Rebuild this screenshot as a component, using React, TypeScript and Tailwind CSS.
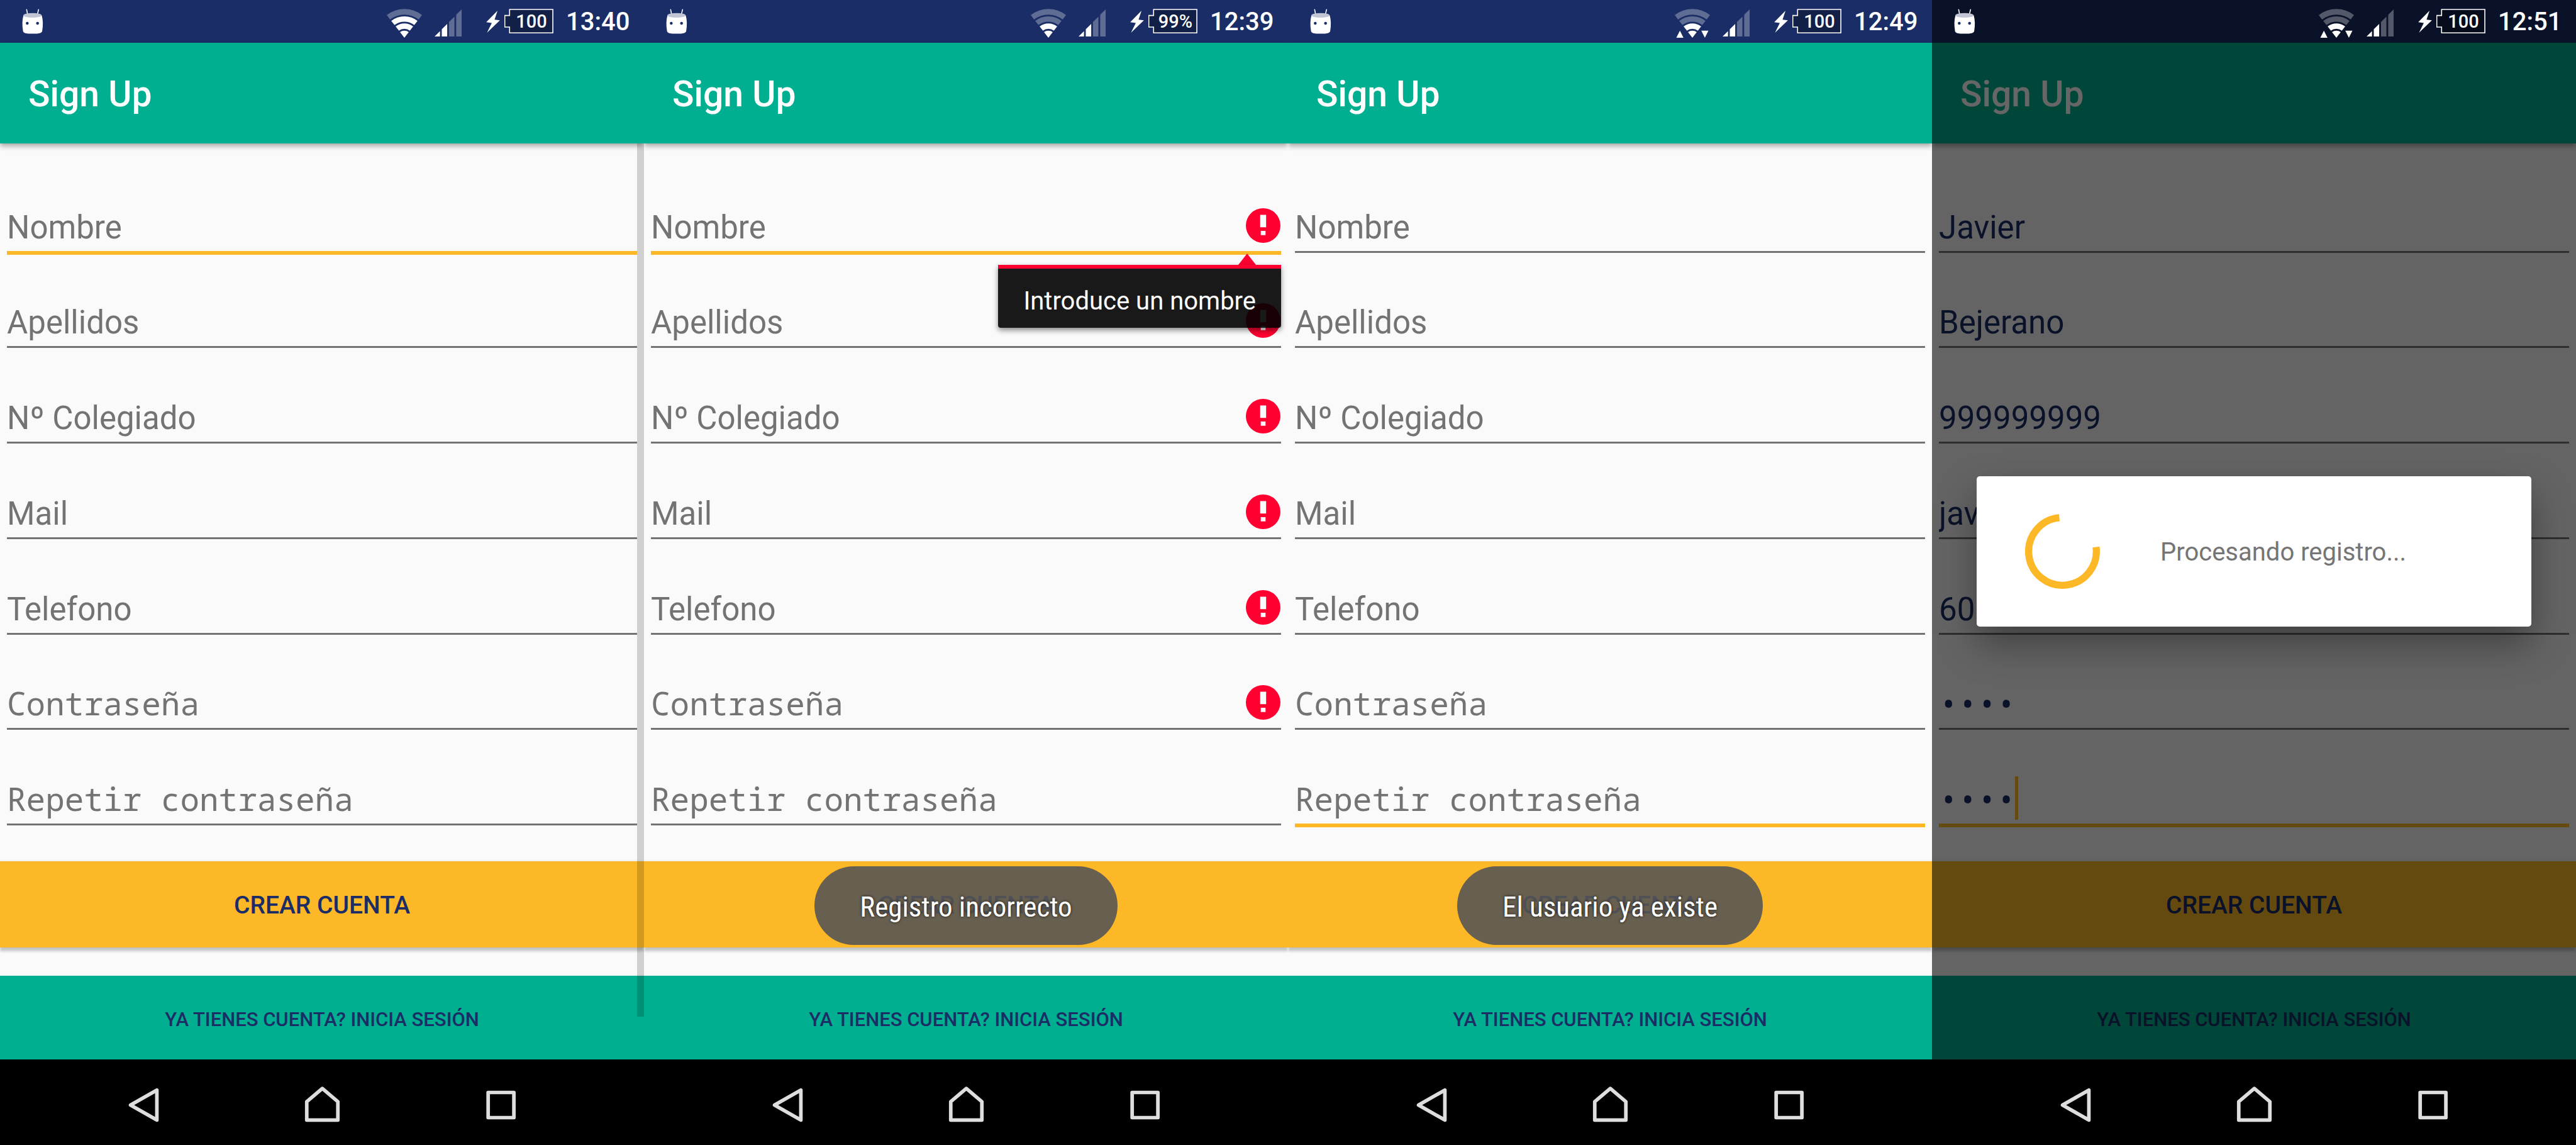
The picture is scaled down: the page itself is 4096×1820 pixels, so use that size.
import React from "react";

type Field = { name: string; secret?: boolean };

type ScreenProps = {
  time: string;
  battery: string;
  wifiLevel: number;
  traffic?: boolean;
  focused: number;
  errors?: number[];
  tooltip?: string;
  toast?: string;
  scrollbar?: boolean;
  values?: string[];
  progress?: string;
};

const fields: Field[] = [
  { name: "Nombre" },
  { name: "Apellidos" },
  { name: "Nº Colegiado" },
  { name: "Mail" },
  { name: "Telefono" },
  { name: "Contraseña", secret: true },
  { name: "Repetir contraseña", secret: true },
];

const screens: ScreenProps[] = [
  { time: "13:40", battery: "100", wifiLevel: 3, focused: 0, scrollbar: true },
  {
    time: "12:39",
    battery: "99%",
    wifiLevel: 2,
    focused: 0,
    errors: [0, 1, 2, 3, 4, 5],
    tooltip: "Introduce un nombre",
    toast: "Registro incorrecto",
  },
  { time: "12:49", battery: "100", wifiLevel: 2, traffic: true, focused: 6, toast: "El usuario ya existe" },
  {
    time: "12:51",
    battery: "100",
    wifiLevel: 2,
    traffic: true,
    focused: 6,
    values: ["Javier", "Bejerano", "999999999", "jav", "60", "1234", "1234"],
    progress: "Procesando registro...",
  },
];

function DroidIcon() {
  return (
    <svg viewBox="50 36 106 124" className="h-[40px] w-[34px]" aria-hidden="true">
      <path d="M73 40 L78 64 M132 40 L126 64" stroke="#fff" strokeWidth="5" strokeLinecap="round" />
      <path
        d="M57 68 C51 90 50 118 55 146 C57 155 66 159 102 159 C138 159 148 155 150 146 C155 118 154 90 148 68 Z"
        fill="#fff"
      />
      <ellipse cx="102" cy="68" rx="45" ry="11.5" fill="#c2c6d4" />
      <circle cx="76" cy="107" r="7" fill="#1a2d66" />
      <circle cx="127" cy="107" r="7" fill="#1a2d66" />
    </svg>
  );
}

const wifiBands = [
  [0, 36],
  [45, 72],
  [81, 108],
  [117, 145],
];

function wedge(inner: number, outer: number) {
  const sin = 0.614;
  const cos = 0.789;
  const at = (r: number, side: number) => `${88 + side * r * sin} ${146 - r * cos}`;
  return `M${at(inner, -1)} L${at(outer, -1)} A${outer} ${outer} 0 0 1 ${at(outer, 1)} L${at(inner, 1)} A${inner} ${inner} 0 0 0 ${at(inner, -1)} Z`;
}

function WifiIcon({ level, traffic }: { level: number; traffic?: boolean }) {
  return (
    <svg viewBox="0 0 176 146" className="mt-1.5 h-[46px] w-[56px]" fill="#fff" aria-hidden="true">
      {wifiBands.map(([inner, outer], i) => (
        <path key={outer} d={wedge(inner, outer)} opacity={i < level ? 1 : 0.3} />
      ))}
      {traffic && <path d="M7 146 L25 110 L43 146 Z M133 110 H169 L151 146 Z" />}
    </svg>
  );
}

function SignalIcon() {
  return (
    <svg viewBox="0 0 135 135" className="mt-1 ml-5 h-[43px] w-[43px]" fill="#fff" aria-hidden="true">
      <path d="M0 135 L27 108 V135 Z M36 135 V99 L63 72 V135 Z" />
      <path d="M72 135 V63 L99 36 V135 Z M108 135 V27 L135 0 V135 Z" opacity="0.3" />
    </svg>
  );
}

function BoltIcon() {
  return (
    <svg viewBox="0 0 69 111" className="ml-[39px] h-[35px] w-[22px]" fill="#fff" aria-hidden="true">
      <path d="M57 0 L0 58 L28 62 L4 111 L69 48 L42 45 Z" />
    </svg>
  );
}

function Battery({ label }: { label: string }) {
  return (
    <div className="ml-[7px] grid items-center justify-items-center">
      <svg viewBox="0 0 245 125" className="col-start-1 row-start-1 h-[40px] w-[78px]" aria-hidden="true">
        <path
          d="M26 3 H242 V120 H26 V91 H2 V33 H26 Z"
          fill="#000"
          fillOpacity="0.3"
          stroke="#fff"
          strokeWidth="5"
        />
      </svg>
      <span className="col-start-1 row-start-1 pl-2 text-[29px] leading-[36px] font-medium">{label}</span>
    </div>
  );
}

function StatusBar({ time, battery, wifiLevel, traffic, dim }: {
  time: string;
  battery: string;
  wifiLevel: number;
  traffic?: boolean;
  dim: boolean;
}) {
  return (
    <div
      className={`flex h-[68px] items-center pr-5 pl-[35px] text-white ${dim ? "bg-[#0a1229]" : "bg-[#1a2d66]"}`}
    >
      <DroidIcon />
      <div className="ml-auto flex items-center">
        <WifiIcon level={wifiLevel} traffic={traffic} />
        <SignalIcon />
        <BoltIcon />
        <Battery label={battery} />
        <span className="ml-5 w-[104px] pt-0.5 text-[40px] leading-[48px] font-medium">{time}</span>
      </div>
    </div>
  );
}

function ErrorIcon() {
  return (
    <svg viewBox="0 0 58 58" className="mr-px mb-[13px] h-[55px] w-[55px] shrink-0" role="img" aria-label="Error">
      <circle cx="29" cy="29" r="29" fill="#ff0030" />
      <path d="M24 11 H34 V32 H24 Z M25 38 H33 V45 H25 Z" fill="#fafafa" />
    </svg>
  );
}

function Tooltip({ text }: { text: string }) {
  return (
    <div role="tooltip" className="absolute top-full right-0 z-20 mt-1 flex flex-col items-end">
      <svg viewBox="0 0 28 18" className="mr-[40px] h-[18px] w-[28px]" fill="#ff0030" aria-hidden="true">
        <path d="M14 0 L28 18 H0 Z" />
      </svg>
      <div className="rounded-b-sm border-t-[6px] border-[#ff0030] bg-black/90 bg-clip-padding px-[40px] pt-[28px] pb-[18px] text-[40px] leading-[48px] whitespace-nowrap text-white shadow-[0_4px_8px_rgba(0,0,0,0.45)]">
        {text}
      </div>
    </div>
  );
}

function FieldRow({ field, focused, error, tooltip, value }: {
  field: Field;
  focused: boolean;
  error: boolean;
  tooltip?: string;
  value?: string;
}) {
  const caret = focused && value !== undefined;
  return (
    <div className="flex flex-col justify-end">
      <div
        className={`relative flex items-end ${
          focused ? "mb-[54px] border-b-[6px] border-[#fcb827]" : "mb-[57px] border-b-[3px] border-[#737373]"
        }`}
      >
        <input
          type={field.secret ? "password" : "text"}
          aria-label={field.name}
          placeholder={field.name}
          defaultValue={value}
          className={`min-w-0 bg-transparent text-[51px] text-[#1a2d66] outline-none placeholder:text-[#737373] placeholder:opacity-100 ${
            field.secret ? "mb-2 h-[64px] font-['Noto_Sans_Mono',monospace] leading-[64px]" : "mb-[7px] h-[60px] leading-[60px]"
          } ${caret ? "w-[121px]" : "flex-1"}`}
        />
        {caret && <span className="mb-[6px] h-[69px] w-[5px] bg-[#fcb827]" />}
        {error && <ErrorIcon />}
        {tooltip && <Tooltip text={tooltip} />}
      </div>
    </div>
  );
}

function ProgressDialog({ text }: { text: string }) {
  return (
    <div className="absolute inset-0 z-30 flex items-center bg-black/60 px-[71px]">
      <div
        role="dialog"
        aria-label={text}
        className="flex w-full items-center gap-24 rounded-[5px] bg-white py-[60px] pl-[77px] shadow-[0_28px_60px_rgba(0,0,0,0.35)]"
      >
        <svg viewBox="0 0 126 126" className="h-[119px] w-[119px]" fill="none" aria-hidden="true">
          <path d="M57.7 6.2 A57 57 0 1 0 119.5 55.6" stroke="#fcb827" strokeWidth="12" />
        </svg>
        <p className="pt-1 text-[40px] leading-[48px] text-[#757575]">{text}</p>
      </div>
    </div>
  );
}

const navIcons = [
  { label: "Back", viewBox: "27 66 186 186", d: "M54 159 L186 84 V234 Z" },
  { label: "Home", viewBox: "927 66 186 186", d: "M1020 76 L1098 142 V234 H942 V142 Z" },
  { label: "Recent apps", viewBox: "88 36 186 186", d: "M117 66 H246 V192 H117 Z" },
];

function NavBar() {
  return (
    <nav className="flex h-[136px] justify-center bg-black pt-[9px]">
      {navIcons.map((icon) => (
        <button key={icon.label} type="button" aria-label={icon.label} className="flex w-[284px] items-center justify-center">
          <svg viewBox={icon.viewBox} className="h-[59px] w-[59px]" fill="none" aria-hidden="true">
            <path d={icon.d} stroke="#dedede" strokeWidth="18" strokeLinejoin="round" />
          </svg>
        </button>
      ))}
    </nav>
  );
}

function Screen(props: ScreenProps) {
  return (
    <section className="flex min-w-0 flex-col overflow-hidden bg-[#fafafa]">
      <StatusBar
        time={props.time}
        battery={props.battery}
        wifiLevel={props.wifiLevel}
        traffic={props.traffic}
        dim={props.progress !== undefined}
      />
      <div className="relative flex flex-1 flex-col">
        <header className="relative z-10 flex h-[160px] items-center bg-[#00ae90] pt-1 pl-[45px] shadow-[0_4px_8px_rgba(0,0,0,0.35)]">
          <h1 className="text-[57px] leading-[68px] font-medium text-white">Sign Up</h1>
        </header>
        <form className="relative flex flex-1 flex-col">
          <div className="grid flex-1 auto-rows-fr px-[11px] pt-[79px]">
            {fields.map((field, i) => (
              <FieldRow
                key={field.name}
                field={field}
                focused={props.focused === i}
                error={props.errors?.includes(i) ?? false}
                tooltip={props.focused === i ? props.tooltip : undefined}
                value={props.values?.[i]}
              />
            ))}
          </div>
          <div className="relative flex">
            <button
              type="button"
              className="h-[137px] flex-1 bg-[#fcb827] pt-1 text-[39px] font-medium text-[#1a2d66] shadow-[0_6px_4px_rgba(0,0,0,0.2),0_0_4px_rgba(0,0,0,0.1)]"
            >
              CREAR CUENTA
            </button>
            {props.toast && (
              <div className="absolute inset-x-0 top-[8px] flex justify-center">
                <div
                  role="status"
                  className="flex h-[125px] items-center rounded-full bg-[rgba(86,85,84,0.9)] px-[72px] pt-1 font-['Roboto_Condensed',Roboto,sans-serif] text-[45px] whitespace-nowrap text-white [text-shadow:0_0_4px_rgba(0,0,0,0.75)]"
                >
                  {props.toast}
                </div>
              </div>
            )}
          </div>
          <button
            type="button"
            className="mt-[45px] h-[133px] bg-[#00ae90] pt-2 text-[31px] font-medium text-[#1a2d66] shadow-[0_0_4px_rgba(0,0,0,0.1)]"
          >
            YA TIENES CUENTA? INICIA SESIÓN
          </button>
          {props.scrollbar && <div className="absolute top-0 right-0 bottom-[68px] w-[11px] bg-black/17" />}
        </form>
        {props.progress && <ProgressDialog text={props.progress} />}
      </div>
      <NavBar />
    </section>
  );
}

export default function App() {
  return (
    <main className="grid min-h-screen grid-cols-4 bg-[#fafafa] font-[Roboto,sans-serif]">
      {screens.map((screen) => (
        <Screen key={screen.time} {...screen} />
      ))}
    </main>
  );
}
